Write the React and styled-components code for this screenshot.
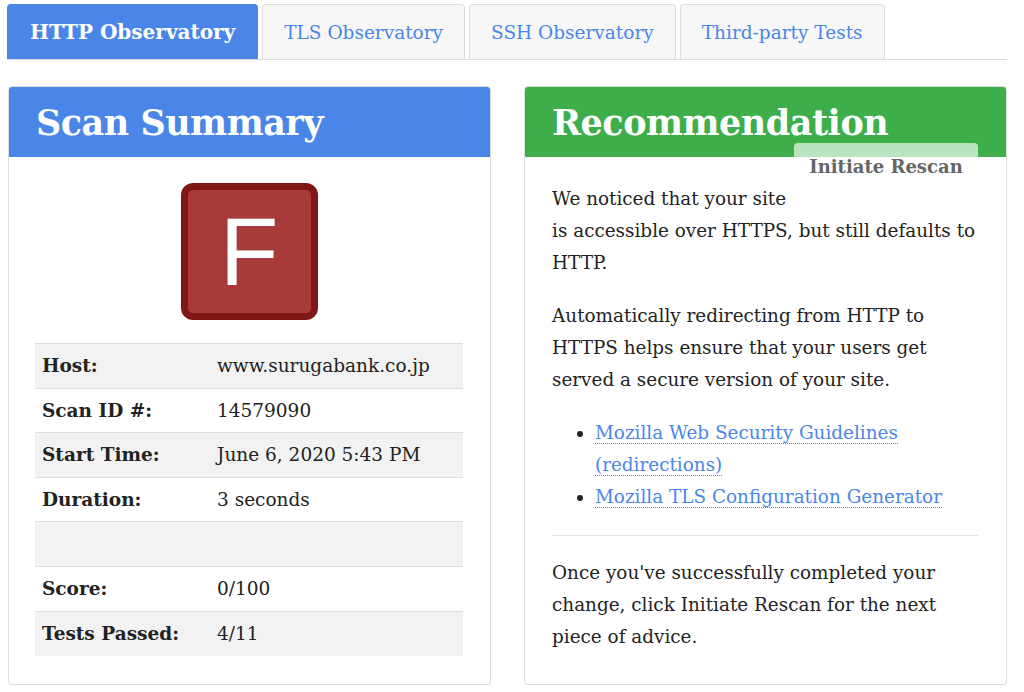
import styled, { createGlobalStyle } from 'styled-components';

const GlobalStyle = createGlobalStyle`
  html, body {
    margin: 0;
    padding: 0;
    background: #fff;
  }
  body {
    font-family: "DejaVu Serif", Georgia, serif;
    color: #222;
  }
`;

const Page = styled.div`
  padding: 4px 17px 0 7px;
`;

const TabBar = styled.nav`
  display: flex;
  gap: 4px;
  border-bottom: 1px solid #ddd;
`;

const Tab = styled.div`
  height: 55px;
  box-sizing: border-box;
  display: flex;
  align-items: center;
  padding: 0 ${p => (p.$active ? 22 : 21)}px;
  font-size: ${p => (p.$active ? 20 : 18.5)}px;
  border-radius: 4px 4px 0 0;
  border: 1px solid ${p => (p.$active ? '#4a86e8' : '#ddd')};
  border-bottom: none;
  background: ${p => (p.$active ? '#4a86e8' : '#f7f7f7')};
  color: ${p => (p.$active ? '#fff' : '#4a86e8')};
  font-weight: ${p => (p.$active ? 700 : 400)};
`;

const Columns = styled.div`
  display: grid;
  grid-template-columns: 483px 483px;
  gap: 33px;
  margin-top: 26px;
  padding-left: 1px;
`;

const Card = styled.section`
  border: 1px solid #ddd;
  border-radius: 4px;
  background: #fff;
  box-shadow: 0 1px 1px rgba(0, 0, 0, 0.05);
`;

const CardHeader = styled.header`
  background: ${p => p.$color};
  border-radius: 3px 3px 0 0;
  height: 70px;
  display: flex;
  align-items: center;
  padding: 0 27px;
`;

const CardTitle = styled.h2`
  margin: 0;
  font-family: "DejaVu Serif", serif;
  font-weight: 700;
  font-size: 35px;
  letter-spacing: -0.5px;
  color: #fff;
`;

const SummaryBody = styled.div`
  padding: 26px 27px 28px 26px;
  display: flex;
  flex-direction: column;
  align-items: center;
`;

const Grade = styled.div`
  width: 137px;
  height: 137px;
  box-sizing: border-box;
  border: 7px solid #7e1818;
  border-radius: 12px;
  background: #a83a3a;
  color: #fff;
  display: flex;
  align-items: center;
  justify-content: center;
  font-family: "Liberation Sans", Arial, sans-serif;
  font-size: 96px;
  line-height: 1;
`;

const SummaryTable = styled.table`
  width: 428px;
  margin-top: 23px;
  border-collapse: collapse;
  table-layout: fixed;
  font-size: 18.5px;
`;

const Row = styled.tr`
  height: 44.6px;
  background: ${p => (p.$striped ? '#f2f2f2' : '#fff')};
  border-top: 1px solid #ddd;
`;

const Label = styled.th`
  width: 161px;
  text-align: left;
  padding: 0 7px;
  font-weight: 700;
  color: #222;
  white-space: nowrap;
`;

const Value = styled.td`
  padding: 0 7px;
  color: #222;
`;

const RecBody = styled.div`
  padding: 26px 28px 30px 27px;
  font-size: 18.4px;
  line-height: 32px;
  color: #222;

  p {
    margin: 0 0 21px;
  }
  p:last-child {
    margin-bottom: 0;
  }
`;

const RescanButton = styled.div`
  float: right;
  width: 184px;
  height: 48px;
  margin-top: -40px;
  border-radius: 4px 4px 0 0;
  background: rgba(255, 255, 255, 0.65);
  display: flex;
  align-items: center;
  justify-content: center;
  font-family: "DejaVu Serif", serif;
  font-weight: 700;
  font-size: 18px;
  color: #666;
  line-height: 1;
`;

const LinkList = styled.ul`
  margin: 0 0 22px;
  padding-left: 43px;
`;

const Link = styled.a`
  color: #4a86e8;
  text-decoration: none;
  border-bottom: 1px dotted #4a86e8;
`;

const Divider = styled.hr`
  border: none;
  border-top: 1px solid #e5e5e5;
  margin: 0 0 21px;
`;

const rows = [
  ['Host:', 'www.surugabank.co.jp'],
  ['Scan ID #:', '14579090'],
  ['Start Time:', 'June 6, 2020 5:43 PM'],
  ['Duration:', '3 seconds'],
  ['', ''],
  ['Score:', '0/100'],
  ['Tests Passed:', '4/11'],
];

const tabs = ['HTTP Observatory', 'TLS Observatory', 'SSH Observatory', 'Third-party Tests'];

export default function App() {
  return (
    <Page>
      <GlobalStyle />
      <TabBar>
        {tabs.map((t, i) => (
          <Tab key={t} $active={i === 0}>{t}</Tab>
        ))}
      </TabBar>
      <Columns>
        <Card>
          <CardHeader $color="#4a86e8">
            <CardTitle>Scan Summary</CardTitle>
          </CardHeader>
          <SummaryBody>
            <Grade>F</Grade>
            <SummaryTable>
              <tbody>
                {rows.map(([k, v], i) => (
                  <Row key={i} $striped={i % 2 === 0}>
                    <Label>{k}</Label>
                    <Value>{v}</Value>
                  </Row>
                ))}
              </tbody>
            </SummaryTable>
          </SummaryBody>
        </Card>
        <Card>
          <CardHeader $color="#3dae4a">
            <CardTitle>Recommendation</CardTitle>
          </CardHeader>
          <RecBody>
            <RescanButton>Initiate Rescan</RescanButton>
            <p>
              We noticed that your site is accessible over HTTPS, but still defaults to HTTP.
            </p>
            <p>
              Automatically redirecting from HTTP to HTTPS helps ensure that your users get
              served a secure version of your site.
            </p>
            <LinkList>
              <li><Link href="#">Mozilla Web Security Guidelines (redirections)</Link></li>
              <li><Link href="#">Mozilla TLS Configuration Generator</Link></li>
            </LinkList>
            <Divider />
            <p>
              Once you've successfully completed your change, click Initiate Rescan for the next
              piece of advice.
            </p>
          </RecBody>
        </Card>
      </Columns>
    </Page>
  );
}
